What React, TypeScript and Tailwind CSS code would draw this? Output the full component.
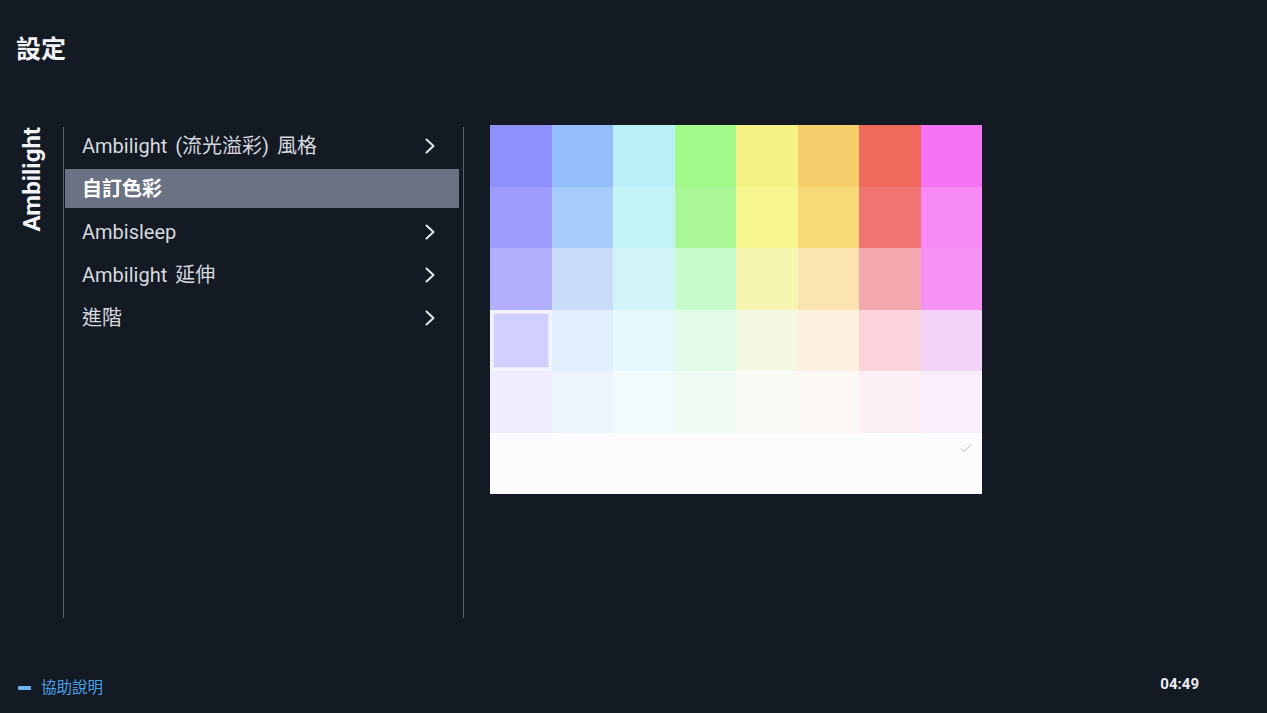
import type { ReactNode } from "react";

const swatches: string[][] = [
  ["#8f8ffd", "#93bdfb", "#b9f1f7", "#a3f98a", "#f5f388", "#f6cf6c", "#f0695d", "#f674f4"],
  ["#9e9cfc", "#a9cdfa", "#c4f3f7", "#aaf795", "#f6f58e", "#f8d978", "#f07572", "#f78af6"],
  ["#b1aefb", "#c9ddf9", "#d2f5f8", "#c8fbcb", "#f6f5b2", "#fbe3b2", "#f2a8ae", "#f592f4"],
  ["#d0cffe", "#e1eefc", "#e6f8fb", "#e2fbe8", "#f6f9e1", "#fcf0e0", "#fbd3da", "#f4d3f8"],
  ["#efedfd", "#eef4fd", "#f1fafc", "#f1fbf4", "#f8faf4", "#fcf8f3", "#fcf0f5", "#f9eefb"],
  ["#fcfcff", "#fcfcff", "#fcfcff", "#fcfcff", "#fcfcff", "#fcfcff", "#fcfcff", "#fcfcff"],
];

const menu = [
  { label: "Ambilight (流光溢彩) 風格", arrow: true },
  { label: "自訂色彩", arrow: false, active: true },
  { label: "Ambisleep", arrow: true },
  { label: "Ambilight 延伸", arrow: true },
  { label: "進階", arrow: true },
];

export default function App() {
  return (
    <div className="flex h-[713px] w-[1267px] flex-col overflow-hidden bg-[#141a24] font-['Roboto','Noto_Sans_CJK_TC',sans-serif] text-[#d9dce2]">
      <div className="h-[125px] shrink-0 pl-[16px] pt-[34px]">
        <h1 className="text-[25px] font-bold leading-[32px] text-[#f2f3f5]">設定</h1>
      </div>

      <div className="flex h-[493px] shrink-0">
        <div className="w-[63px] shrink-0 pl-[17px] pt-[2px]">
          <div className="rotate-180 text-[24px] font-bold leading-[30px] text-[#f2f3f5] [writing-mode:vertical-rl]">
            Ambilight
          </div>
        </div>
        <div className="mt-[2px] w-px shrink-0 bg-[#5b616c]" />

        <div className="w-[399px] shrink-0 pl-px pr-[4px] pt-px">
          <div className="flex flex-col gap-[4px]">
            {menu.map((item) => (
              <MenuRow key={item.label} active={item.active} arrow={item.arrow}>
                {item.label}
              </MenuRow>
            ))}
          </div>
        </div>
        <div className="mt-[2px] w-px shrink-0 bg-[#5b616c]" />

        <div className="pl-[26px]">
          <div className="grid h-[369px] w-[492px] grid-cols-8 grid-rows-6">
            {swatches.map((row, r) =>
              row.map((color, c) => (
                <div
                  key={`${r}-${c}`}
                  className={
                    r === 3 && c === 0
                      ? "relative border-[3px] border-[#f3f3fb] [box-shadow:inset_0_0_0_1px_#e6e5fb]"
                      : "relative"
                  }
                  style={{ backgroundColor: color }}
                >
                  {r === 5 && c === 7 ? (
                    <svg className="absolute right-[10px] top-[10px]" width="12" height="10" viewBox="0 0 12 10" fill="none">
                      <path d="M1 5.5 L4.2 8.5 L11 1.5" stroke="#d6d6de" strokeWidth="1.6" />
                    </svg>
                  ) : null}
                </div>
              ))
            )}
          </div>
        </div>
      </div>

      <div className="flex flex-1 items-start justify-between pl-[18px] pr-[68px]">
        <div className="mt-[61px] flex items-center gap-[10px]">
          <span className="h-[4px] w-[13px] rounded-[1px] bg-[#6fb4ec]" />
          <span className="text-[15.5px] leading-[18px] text-[#4aa0e6]">協助說明</span>
        </div>
        <div className="mt-[57px] text-[15px] font-bold leading-[18px] text-[#eceef2]">04:49</div>
      </div>
    </div>
  );
}

function MenuRow({ children, active, arrow }: { children: ReactNode; active?: boolean; arrow?: boolean }) {
  return (
    <div
      className={
        active
          ? "flex h-[39px] items-center justify-between bg-[#6b7283] pl-[17px] pr-[24px] text-[20px] font-bold text-white"
          : "flex h-[39px] items-center justify-between pl-[17px] pr-[24px] text-[20px] text-[#d6d9df]"
      }
    >
      <span className="leading-[24px] [word-spacing:3px]">{children}</span>
      {arrow ? (
        <svg width="10" height="16" viewBox="0 0 10 16" fill="none">
          <path d="M1.5 1.5 L8.5 8 L1.5 14.5" stroke="#e4e6ea" strokeWidth="2" strokeLinecap="round" strokeLinejoin="round" />
        </svg>
      ) : null}
    </div>
  );
}
